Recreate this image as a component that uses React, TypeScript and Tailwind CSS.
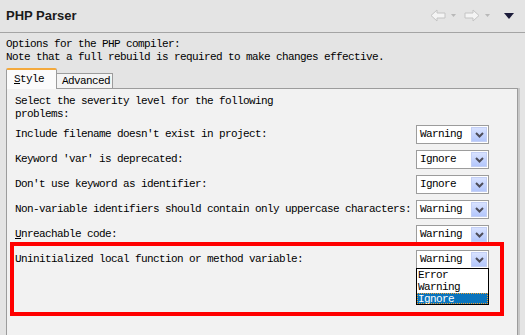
import React from "react";

const mono = "font-['Liberation_Mono','DejaVu_Sans_Mono',monospace] text-[11px] tracking-[-0.6px] leading-[13px] text-black";

type Rule = { label: React.ReactNode; value: string };

const rules: Rule[] = [
  { label: "Include filename doesn't exist in project:", value: "Warning" },
  { label: "Keyword 'var' is deprecated:", value: "Ignore" },
  { label: "Don't use keyword as identifier:", value: "Ignore" },
  {
    label: "Non-variable identifiers should contain only uppercase characters:",
    value: "Warning",
  },
  {
    label: (
      <>
        <span className="underline">U</span>nreachable code:
      </>
    ),
    value: "Warning",
  },
  { label: "Uninitialized local function or method variable:", value: "Warning" },
];

const NavArrow = ({ flip }: { flip?: boolean }) => (
  <svg width="16" height="13" viewBox="0 0 16 13" className={flip ? "-scale-x-100" : ""}>
    <path
      d="M1 6.5 L7 1 L7 4 L15 4 L15 9 L7 9 L7 12 Z"
      fill="#f4f4f4"
      stroke="#c4c4c4"
      strokeWidth="1"
      strokeLinejoin="round"
    />
  </svg>
);

const TinyCaret = () => (
  <svg width="5" height="3" viewBox="0 0 5 3">
    <path d="M0 0 L5 0 L2.5 3 Z" fill="#b8b8b8" />
  </svg>
);

const SelectBox = ({ value }: { value: string }) => (
  <div className="relative w-[73px] h-[19px] bg-white border border-[#9c9c9c] flex items-center pl-[3px]">
    <span className={mono}>{value}</span>
    <span className="absolute right-[1px] top-[1px] w-[16px] h-[15px] bg-gradient-to-b from-[#d8e2ff] to-[#b3c6fb] border border-[#c3cff5] flex items-center justify-center">
      <svg width="9" height="6" viewBox="0 0 9 6">
        <path d="M1 1 L4.5 4.5 L8 1" fill="none" stroke="#4d4d5a" strokeWidth="2" />
      </svg>
    </span>
  </div>
);

export default function App() {
  return (
    <div className="relative w-[525px] h-[335px] overflow-hidden bg-[#e4e4e4] flex flex-col">
      {/* header */}
      <div className="h-[33px] shrink-0 flex items-center justify-between pl-[6px] pr-[11px] border-b border-[#a4a4a4]">
        <span className="font-['Liberation_Sans',Arial,sans-serif] font-bold text-[13px] text-[#1a1a1a] -mt-[1px]">
          PHP Parser
        </span>
        <div className="flex items-center -mt-[1px]">
          <NavArrow />
          <span className="ml-[5px] mr-[8px]"><TinyCaret /></span>
          <NavArrow flip />
          <span className="ml-[5px] mr-[14px]"><TinyCaret /></span>
          <svg width="10" height="6" viewBox="0 0 10 6">
            <path d="M0 0 L10 0 L5 6 Z" fill="#1c1c3a" />
          </svg>
        </div>
      </div>

      <div className={`${mono} pl-[6px] pt-[5px]`}>
        <div>Options for the PHP compiler:</div>
        <div>Note that a full rebuild is required to make changes effective.</div>
      </div>

      {/* tabs */}
      <div className="flex items-end pl-[6px] mt-[3px] h-[21px] shrink-0 relative z-10">
        <div className={`${mono} w-[51px] h-[21px] bg-[#fbfbfb] border-x border-[#9c9c9c] border-t-[2px] border-t-[#f4a93c] rounded-t-[2px] pl-[7px] pt-[3px] -mb-[1px]`}>
          <span className="underline">S</span>tyle
        </div>
        <div className={`${mono} w-[56px] h-[15px] bg-[#f4f4f4] border-r border-t border-[#9c9c9c] pl-[5px] pt-[1px]`}>
          Advanced
        </div>
      </div>

      {/* panel */}
      <div className="ml-[6px] w-[512px] flex-1 bg-[#f2f2f2] border border-[#9c9c9c] border-b-0 shadow-[2px_0_0_#c8c8c8] pl-[8px] pr-[28px] pt-[6px]">
        <div className={mono}>
          <div>Select the severity level for the following</div>
          <div>problems:</div>
        </div>
        <div className="mt-[1px] flex flex-col">
          {rules.map((r, i) => (
            <div key={i} className="h-[25px] flex items-center justify-between">
              <span className={mono}>{r.label}</span>
              <SelectBox value={r.value} />
            </div>
          ))}
        </div>
      </div>

      {/* annotation */}
      <div className="absolute left-[10px] top-[242px] w-[494px] h-[74px] border-[4px] border-[#ff0000] pointer-events-none" />

      {/* open dropdown list */}
      <div className="absolute left-[416px] top-[268px] w-[73px] h-[37px] bg-white border border-black flex flex-col">
        <div className={`${mono} h-[12px] pl-[1px] leading-[12px]`}>Error</div>
        <div className={`${mono} h-[12px] pl-[1px] leading-[12px]`}>Warning</div>
        <div className={`${mono} h-[11px] pl-[1px] leading-[11px] bg-[#0a74bd] text-white outline-1 outline-dotted outline-[#f0a030] -outline-offset-1`}>
          Ignore
        </div>
      </div>
    </div>
  );
}
